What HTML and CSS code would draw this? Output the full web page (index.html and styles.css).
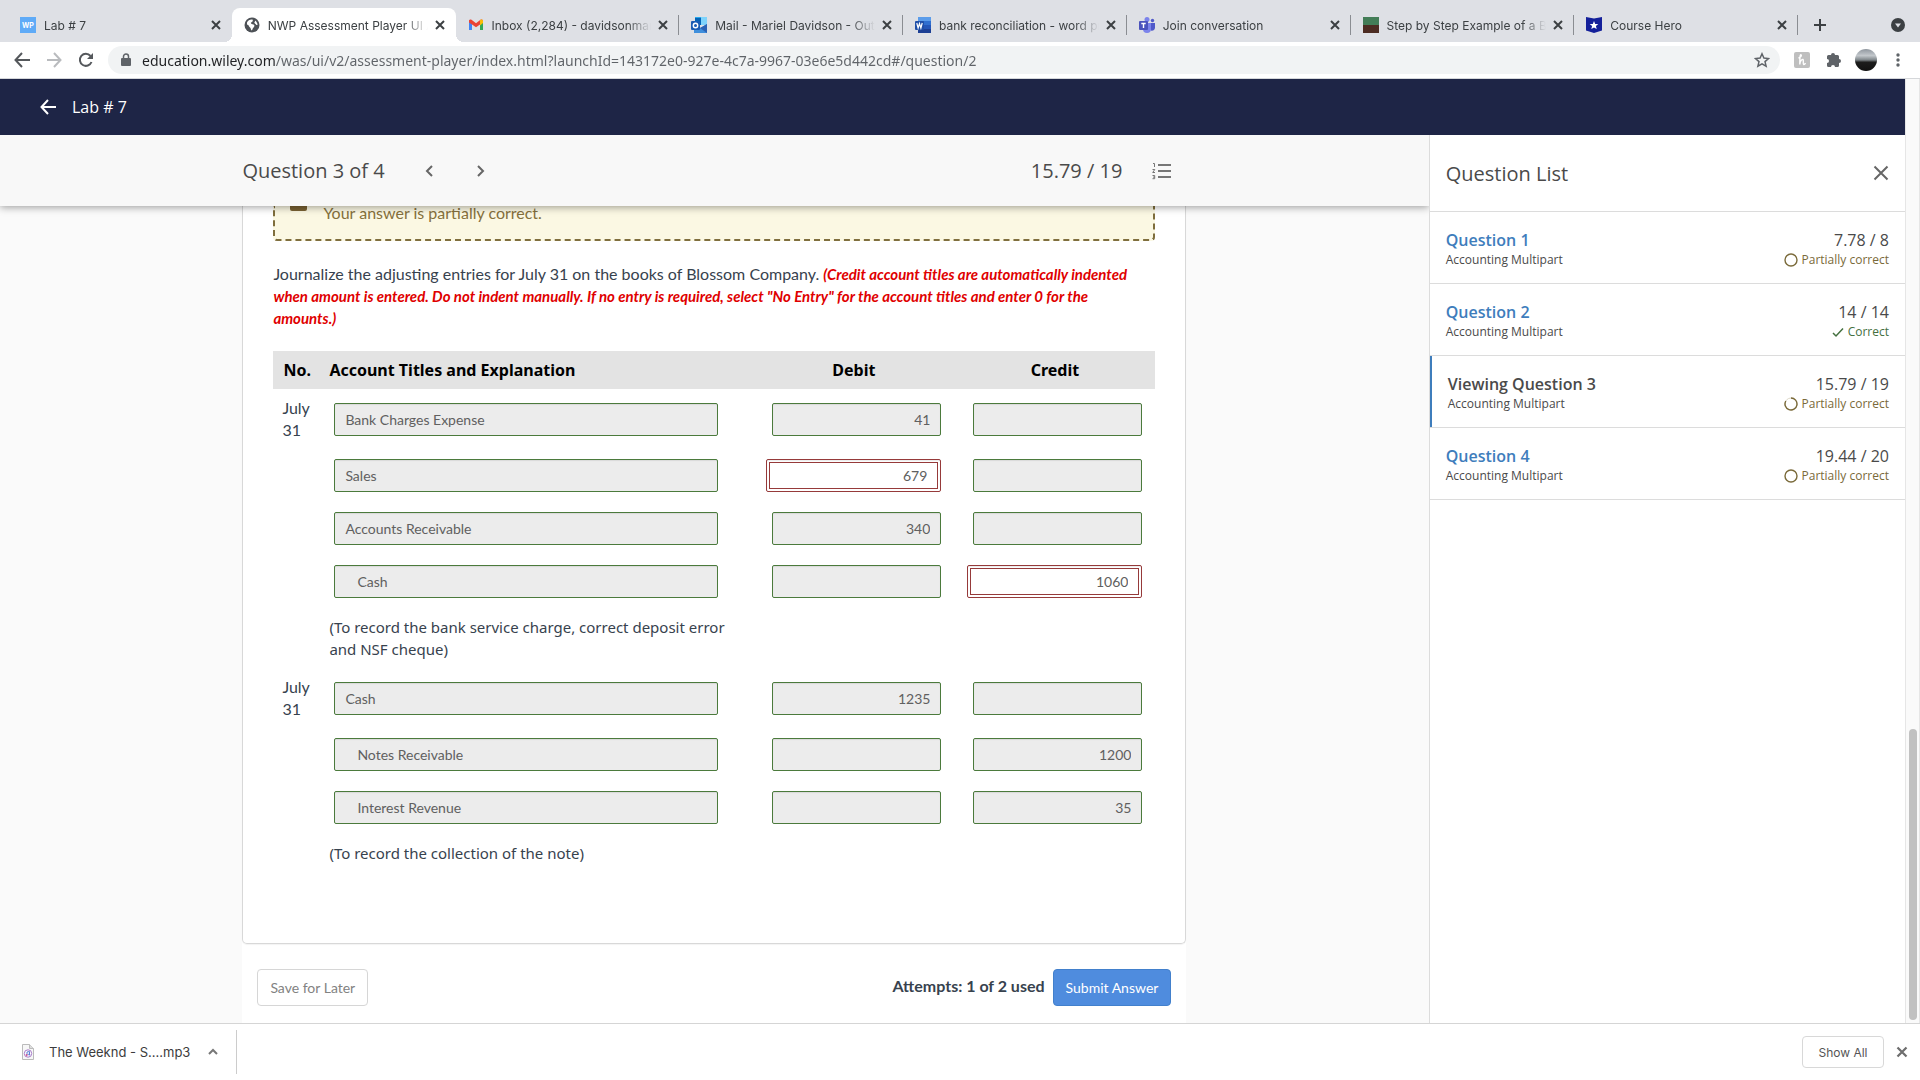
FILE: index.html
```
<!DOCTYPE html>
<html lang="en">

<head>
    <meta charset="UTF-8">
    <meta name="viewport" content="width=device-width, initial-scale=1.0">
    <title>NWP Assessment Player UI Application</title>
    <link rel="stylesheet" href="styles.css">
</head>

<body>
    <!-- shared icons -->
    <svg class="sprite" aria-hidden="true">
        <symbol id="i-close" viewBox="0 0 16 16"><path d="M4 4l8 8M12 4l-8 8" fill="none" stroke="currentColor" stroke-width="2"/></symbol>
        <symbol id="i-ring" viewBox="0 0 14 14"><circle cx="7" cy="7" r="6" fill="none" stroke="currentColor" stroke-width="1.4"/></symbol>
        <symbol id="i-arrow" viewBox="0 0 16 16"><path d="M16 8H2M8 1L1.500 8L8 15" fill="none" stroke="currentColor" stroke-width="2"/></symbol>
    </svg>

    <div class="tab-bar">
        <div class="tabs">
            <div class="tab">
                <svg class="favicon" viewBox="0 0 16 16"><rect width="16" height="16" fill="#5fabf7"/><text x="8" y="11" text-anchor="middle" class="wp">WP</text></svg>
                <span class="tab-title">Lab # 7</span>
                <button class="tab-close" aria-label="Close tab"><svg viewBox="0 0 16 16"><use href="#i-close"/></svg></button>
            </div>
            <div class="tab active">
                <svg class="favicon" viewBox="0 0 16 16"><circle cx="8" cy="8" r="7.500" fill="#4d5156"/><path d="M3 5.500C4 3 6.500 2 8.500 2.500C9.500 4 8 5 7 5.500C6.500 7 8 7 9.500 7.500C11 8 10.500 10 9 11C8.500 12 8.500 13 7.500 13.500C6.500 12 7 11 5.500 10C4.500 9 5 8 3 7.500ZM11 3.500C12.500 4.500 13.500 6 13.500 8C12.500 8.500 11.500 7 10.500 6C10 5 11.500 4.500 11 3.500Z" fill="#fff"/></svg>
                <span class="tab-title">NWP Assessment Player UI Application</span>
                <button class="tab-close" aria-label="Close tab"><svg viewBox="0 0 16 16"><use href="#i-close"/></svg></button>
            </div>
            <div class="tab divided">
                <svg class="favicon" viewBox="0 0 16 16"><path d="M1 3.500V13h3V7z" fill="#4285f4"/><path d="M15 3.500V13h-3V7z" fill="#34a853"/><path d="M1 3.200C1.500 2.200 2.800 2.200 3.500 2.800L8 6.300L12.500 2.800C13.500 2 14.600 2.500 15 3.300L12 7.500L8 10.200L4 7.500L1 5.500z" fill="#ea4335"/><path d="M12 3.200l.5-.4c1-.8 2.500-.2 2.500 1.200V6l-3 2.500z" fill="#fbbc04"/></svg>
                <span class="tab-title">Inbox (2,284) - davidsonmariel@gmail.com</span>
                <button class="tab-close" aria-label="Close tab"><svg viewBox="0 0 16 16"><use href="#i-close"/></svg></button>
            </div>
            <div class="tab divided">
                <svg class="favicon" viewBox="0 0 16 16"><path d="M4 0h12v8H4z" fill="#28a8ea"/><path d="M10 0h6v8h-6z" fill="#7fd3fb"/><path d="M4 1h6v7H4z" fill="#0364b8"/><path d="M3 16V7l6.500 4L16 7v9z" fill="#3f8fdc"/><path d="M16 7v9L9 11z" fill="#2b62b5"/><rect y="4" width="9" height="9" rx="1" fill="#1a5db4"/><circle cx="4.500" cy="8.500" r="2.200" fill="none" stroke="#fff" stroke-width="1.400"/></svg>
                <span class="tab-title">Mail - Mariel Davidson - Outlook</span>
                <button class="tab-close" aria-label="Close tab"><svg viewBox="0 0 16 16"><use href="#i-close"/></svg></button>
            </div>
            <div class="tab divided">
                <svg class="favicon" viewBox="0 0 16 16"><path d="M3 0h13v4H3z" fill="#5b9cea"/><path d="M3 4h13v4H3z" fill="#2f6fd0"/><path d="M3 8h13v4H3z" fill="#2456b8"/><path d="M3 12h13v4H3z" fill="#1c3f94"/><rect y="4" width="9" height="9" rx="1" fill="#1f4fa8"/><path d="M1.800 6l1.300 5L4.500 6.500L5.900 11L7.200 6" fill="none" stroke="#fff" stroke-width="1.200"/></svg>
                <span class="tab-title">bank reconciliation - word problem</span>
                <button class="tab-close" aria-label="Close tab"><svg viewBox="0 0 16 16"><use href="#i-close"/></svg></button>
            </div>
            <div class="tab divided">
                <svg class="favicon" viewBox="0 0 16 16"><circle cx="8" cy="2.500" r="2.500" fill="#7b83eb"/><circle cx="13.500" cy="3.500" r="1.700" fill="#5059c9"/><path d="M11 6h5v5a3 3 0 0 1-4 2.500z" fill="#5059c9"/><path d="M4 6h8v6a4 4 0 0 1-8 0z" fill="#7b83eb"/><rect y="4" width="9" height="9" rx="1" fill="#4b53bc"/><path d="M2.300 6.500h4.400M4.500 6.500V11" stroke="#fff" stroke-width="1.400"/></svg>
                <span class="tab-title">Join conversation</span>
                <button class="tab-close" aria-label="Close tab"><svg viewBox="0 0 16 16"><use href="#i-close"/></svg></button>
            </div>
            <div class="tab divided">
                <svg class="favicon" viewBox="0 0 16 16"><rect width="16" height="8" fill="#437d57"/><rect y="8" width="16" height="8" fill="#4c2c22"/></svg>
                <span class="tab-title">Step by Step Example of a Bank Reconciliation</span>
                <button class="tab-close" aria-label="Close tab"><svg viewBox="0 0 16 16"><use href="#i-close"/></svg></button>
            </div>
            <div class="tab divided">
                <svg class="favicon" viewBox="0 0 16 16"><path d="M0 0l8 1.500L16 0v13.500L8 16L0 13.500z" fill="#14209a"/><path d="M8 4l1.200 2.900 3.100.2-2.400 2 .8 3L8 10.400l-2.700 1.700.8-3-2.400-2 3.100-.2z" fill="#fff"/></svg>
                <span class="tab-title">Course Hero</span>
                <button class="tab-close" aria-label="Close tab"><svg viewBox="0 0 16 16"><use href="#i-close"/></svg></button>
            </div>
        </div>
        <div class="tab-tools">
            <button aria-label="New tab"><svg width="16" height="16" viewBox="0 0 16 16"><path d="M8 2v12M2 8h12" stroke="#3c4043" stroke-width="2"/></svg></button>
            <button aria-label="Search tabs"><svg width="16" height="16" viewBox="0 0 16 16"><circle cx="8" cy="8" r="7" fill="#3c4043"/><path d="M5 6.500h6L8 10.500z" fill="#dee0e5"/></svg></button>
        </div>
    </div>

    <div class="toolbar">
        <div class="nav-buttons">
            <button aria-label="Back"><svg width="16" height="16"><use href="#i-arrow"/></svg></button>
            <button class="disabled" aria-label="Forward"><svg width="16" height="16" viewBox="0 0 16 16"><path d="M1 8h13M8 1l6.500 7L8 15" fill="none" stroke="currentColor" stroke-width="2"/></svg></button>
            <button aria-label="Reload"><svg width="16" height="16" viewBox="0 0 16 16"><path d="M13.500 10A6 6 0 1 1 12.500 4" fill="none" stroke="currentColor" stroke-width="2"/><path d="M15 1v6H9z" fill="currentColor"/></svg></button>
        </div>
        <div class="url-bar">
            <svg width="12" height="14" viewBox="0 0 12 14"><path d="M2 5h8a1 1 0 0 1 1 1v6a1 1 0 0 1-1 1H2a1 1 0 0 1-1-1V6a1 1 0 0 1 1-1z" fill="#5f6368"/><path d="M3.500 5V3.500a2.500 2.500 0 0 1 5 0V5" fill="none" stroke="#5f6368" stroke-width="1.500"/></svg>
            <input class="url" type="text" aria-label="Address" value="education.wiley.com/was/ui/v2/assessment-player/index.html?launchId=143172e0-927e-4c7a-9967-03e6e5d442cd#/question/2">
            <button aria-label="Bookmark"><svg width="16" height="16" viewBox="0 0 16 16"><path d="M8 1.800l1.900 4.300 4.600.4-3.500 3.100 1.100 4.600L8 11.800l-4.100 2.400L5 9.600 1.500 6.500l4.600-.4z" fill="none" stroke="#5f6368" stroke-width="1.500"/></svg></button>
        </div>
        <div class="extensions">
            <button aria-label="Honey"><svg width="16" height="16" viewBox="0 0 16 16"><rect width="16" height="16" rx="2" fill="#bfbfbf"/><path d="M4.500 6C6.500 5.500 8 3.500 7 2.800C6 2.500 5.800 6 5.800 12.500C6 9.500 7.500 7 9 7.500C10 8 8.500 12 9.700 12.500C10.500 12.700 11 12 11.500 11" fill="none" stroke="#fff" stroke-width="1.400"/></svg></button>
            <button aria-label="Extensions"><svg width="16" height="16" viewBox="0 0 16 16"><path d="M1 4.500A1.500 1.500 0 0 1 2.500 3H5a2 2 0 0 1 4 0h2.500A1.500 1.500 0 0 1 13 4.500V7a2 2 0 0 1 0 4v2.500a1.500 1.500 0 0 1-1.500 1.500H9a2 2 0 0 0-4 0H2.500A1.500 1.500 0 0 1 1 13.500V11a2 2 0 0 0 0-4z" fill="#5f6368"/></svg></button>
            <button aria-label="Profile"><span class="avatar"></span></button>
            <button aria-label="Menu"><svg width="16" height="16" viewBox="0 0 16 16"><circle cx="8" cy="3" r="1.700" fill="#5f6368"/><circle cx="8" cy="8" r="1.700" fill="#5f6368"/><circle cx="8" cy="13" r="1.700" fill="#5f6368"/></svg></button>
        </div>
    </div>

    <div class="viewport">
        <div class="page">
            <header class="app-header">
                <a href="#" aria-label="Back"><svg width="16" height="16"><use href="#i-arrow"/></svg></a>
                <h1>Lab # 7</h1>
            </header>
            <div class="columns">
                <main>
                    <div class="question-bar">
                        <div class="question-bar-inner">
                            <span>Question 3 of 4</span>
                            <div class="pager">
                                <button aria-label="Previous question"><svg width="8" height="14" viewBox="0 0 8 14"><path d="M7 2L2 7l5 5" fill="none" stroke="#666" stroke-width="2"/></svg></button>
                                <button aria-label="Next question"><svg width="8" height="14" viewBox="0 0 8 14"><path d="M1 2l5 5-5 5" fill="none" stroke="#666" stroke-width="2"/></svg></button>
                            </div>
                            <span class="score">15.79 / 19</span>
                            <button class="list-toggle" aria-label="Question list"><svg width="20" height="18" viewBox="0 0 20 18"><path d="M6 3h13M6 9h13M6 15h13" stroke="#777" stroke-width="2"/><path d="M1 1.500h1.500V5M.5 7.500h2.300L.7 10.500h2.300M.5 13.500h2.200v3.200H.5M1 15.100h1.700" fill="none" stroke="#777"/></svg></button>
                        </div>
                    </div>

                    <div class="sheet">
                        <section class="card">
                            <div class="alert">
                                <span class="alert-icon"></span>
                                <span>Your answer is partially correct.</span>
                            </div>
                            <p class="instructions">Journalize the adjusting entries for July 31 on the books of Blossom Company. <strong>(Credit account titles are automatically indented when amount is entered. Do not indent manually. If no entry is required, select "No Entry" for the account titles and enter 0 for the amounts.)</strong></p>
                            <table class="journal">
                                <thead>
                                    <tr>
                                        <th class="col-no">No.</th>
                                        <th>Account Titles and Explanation</th>
                                        <th class="col-amount">Debit</th>
                                        <th class="col-amount">Credit</th>
                                    </tr>
                                </thead>
                                <tbody>
                                    <tr class="first">
                                        <td>July 31</td>
                                        <td><input class="field account" aria-label="Account title" value="Bank Charges Expense" readonly></td>
                                        <td><input class="field amount" aria-label="Debit" value="41" readonly></td>
                                        <td><input class="field amount" aria-label="Credit" readonly></td>
                                    </tr>
                                    <tr>
                                        <td></td>
                                        <td><input class="field account" aria-label="Account title" value="Sales" readonly></td>
                                        <td><input class="field amount wrong" aria-label="Debit" value="679"></td>
                                        <td><input class="field amount" aria-label="Credit" readonly></td>
                                    </tr>
                                    <tr>
                                        <td></td>
                                        <td><input class="field account" aria-label="Account title" value="Accounts Receivable" readonly></td>
                                        <td><input class="field amount" aria-label="Debit" value="340" readonly></td>
                                        <td><input class="field amount" aria-label="Credit" readonly></td>
                                    </tr>
                                    <tr>
                                        <td></td>
                                        <td><input class="field account indent" aria-label="Account title" value="Cash" readonly></td>
                                        <td><input class="field amount" aria-label="Debit" readonly></td>
                                        <td><input class="field amount wrong" aria-label="Credit" value="1060"></td>
                                    </tr>
                                    <tr class="note">
                                        <td></td>
                                        <td>(To record the bank service charge, correct deposit error and NSF cheque)</td>
                                        <td></td>
                                        <td></td>
                                    </tr>
                                    <tr class="first">
                                        <td>July 31</td>
                                        <td><input class="field account" aria-label="Account title" value="Cash" readonly></td>
                                        <td><input class="field amount" aria-label="Debit" value="1235" readonly></td>
                                        <td><input class="field amount" aria-label="Credit" readonly></td>
                                    </tr>
                                    <tr>
                                        <td></td>
                                        <td><input class="field account indent" aria-label="Account title" value="Notes Receivable" readonly></td>
                                        <td><input class="field amount" aria-label="Debit" readonly></td>
                                        <td><input class="field amount" aria-label="Credit" value="1200" readonly></td>
                                    </tr>
                                    <tr>
                                        <td></td>
                                        <td><input class="field account indent" aria-label="Account title" value="Interest Revenue" readonly></td>
                                        <td><input class="field amount" aria-label="Debit" readonly></td>
                                        <td><input class="field amount" aria-label="Credit" value="35" readonly></td>
                                    </tr>
                                    <tr class="note">
                                        <td></td>
                                        <td>(To record the collection of the note)</td>
                                        <td></td>
                                        <td></td>
                                    </tr>
                                </tbody>
                            </table>
                        </section>
                        <div class="actions">
                            <button class="btn">Save for Later</button>
                            <span class="attempts">Attempts: 1 of 2 used</span>
                            <button class="btn btn-primary">Submit Answer</button>
                        </div>
                    </div>
                </main>

                <aside class="question-list">
                    <div class="list-header">
                        <h2>Question List</h2>
                        <button aria-label="Close question list"><svg width="16" height="16" viewBox="0 0 16 16"><path d="M1.500 1.500l13 13M14.500 1.500l-13 13" stroke="#666" stroke-width="2"/></svg></button>
                    </div>
                    <ul>
                        <li>
                            <div><a href="#">Question 1</a><small>Accounting Multipart</small></div>
                            <div class="result"><span>7.78 / 8</span><small class="partial"><svg width="14" height="14"><use href="#i-ring"/></svg>Partially correct</small></div>
                        </li>
                        <li>
                            <div><a href="#">Question 2</a><small>Accounting Multipart</small></div>
                            <div class="result"><span>14 / 14</span><small class="correct"><svg width="12" height="12" viewBox="0 0 12 12"><path d="M1 7l3 3 7-7.500" fill="none" stroke="currentColor" stroke-width="1.500"/></svg>Correct</small></div>
                        </li>
                        <li class="current">
                            <div><b>Viewing Question 3</b><small>Accounting Multipart</small></div>
                            <div class="result"><span>15.79 / 19</span><small class="partial"><svg width="14" height="14" viewBox="0 0 14 14"><circle cx="7" cy="7" r="6" fill="none" stroke="#ddd8c8"/><path d="M7 1a6 6 0 1 1-5.200 3" fill="none" stroke="currentColor" stroke-width="1.400"/></svg>Partially correct</small></div>
                        </li>
                        <li>
                            <div><a href="#">Question 4</a><small>Accounting Multipart</small></div>
                            <div class="result"><span>19.44 / 20</span><small class="partial"><svg width="14" height="14"><use href="#i-ring"/></svg>Partially correct</small></div>
                        </li>
                    </ul>
                </aside>
            </div>
        </div>
        <div class="scrollbar"><div class="thumb"></div></div>
    </div>

    <div class="downloads">
        <div class="download-item">
            <svg width="12" height="16" viewBox="0 0 12 16"><path d="M.5.500h7l4 4v11H.5z" fill="#f7f7f7" stroke="#bbb"/><path d="M7.500.500v4h4" fill="#ddd" stroke="#bbb"/><circle cx="6" cy="9.500" r="3.700" fill="#fff" stroke="#a779c9"/><path d="M5 11V8l2.500-.5v3" fill="none" stroke="#5a7fd6"/><circle cx="4.700" cy="11" r="1" fill="#d0578f"/><circle cx="7.200" cy="10.500" r="1" fill="#5a7fd6"/></svg>
            <span>The Weeknd - S....mp3</span>
            <button aria-label="Download options"><svg width="10" height="8" viewBox="0 0 10 8"><path d="M1 6l4-4 4 4" fill="none" stroke="#777" stroke-width="2"/></svg></button>
        </div>
        <button class="show-all">Show All</button>
        <button class="close-downloads" aria-label="Close downloads"><svg width="18" height="18"><use href="#i-close"/></svg></button>
    </div>
</body>

</html>
```
FILE: styles.css
```
* {
    box-sizing: border-box;
}

body {
    margin: 0;
    height: 100vh;
    display: flex;
    flex-direction: column;
    overflow: hidden;
    background: #fff;
    color: #4a4a4a;
    font-family: "Open Sans", "Noto Sans", sans-serif;
}

button {
    display: flex;
    align-items: center;
    justify-content: center;
    padding: 0;
    border: 0;
    background: none;
    color: inherit;
    font: inherit;
}

svg {
    display: block;
    flex: none;
}

.sprite {
    position: absolute;
    width: 0;
    height: 0;
}

/* browser tabs */

.tab-bar {
    display: flex;
    flex: none;
    padding: 8px 14px 0 8px;
    background: #dee0e5;
    font: 12px Inter, sans-serif;
    color: #3c4043;
}

.tabs {
    display: flex;
    flex: 1;
    min-width: 0;
}

.tab {
    display: flex;
    flex: 1;
    align-items: center;
    min-width: 0;
    height: 34px;
    padding-left: 12px;
    position: relative;
}

.tab.active {
    background: #fff;
    border-radius: 8px 8px 0 0;
}

.tab.active::before,
.tab.active::after {
    content: "";
    position: absolute;
    bottom: 0;
    width: 8px;
    height: 8px;
}

.tab.active::before {
    left: -8px;
    background: radial-gradient(circle at 0 0, transparent 8px, #fff 8px);
}

.tab.active::after {
    right: -8px;
    background: radial-gradient(circle at 100% 0, transparent 8px, #fff 8px);
}

.tab.divided::after {
    content: "";
    width: 1px;
    height: 20px;
    background: #8a8d92;
}

.favicon {
    width: 16px;
    height: 16px;
}

.wp {
    font: bold 7px Inter, sans-serif;
    fill: #fff;
}

.tab-title {
    flex: 1;
    min-width: 0;
    margin: 0 4px 0 8px;
    overflow: hidden;
    white-space: nowrap;
    -webkit-mask-image: linear-gradient(to left, transparent, #000 24px);
    mask-image: linear-gradient(to left, transparent, #000 24px);
}

.tab-close {
    width: 16px;
    margin-right: 8px;
}

.tab.divided .tab-close {
    margin-right: 7px;
}

.tab-close svg {
    width: 16px;
    height: 16px;
}

.tab-tools {
    display: flex;
    justify-content: space-between;
    width: 108px;
    padding-left: 14px;
}

/* address bar */

.toolbar {
    display: flex;
    flex: none;
    align-items: center;
    height: 37px;
    border-bottom: 1px solid #d5d7da;
    color: #55585c;
}

.nav-buttons {
    display: flex;
    gap: 16px;
    padding: 0 14px;
}

.disabled {
    color: #b9bbbe;
}

.url-bar {
    display: flex;
    flex: 1;
    align-items: center;
    height: 28px;
    padding: 0 10px 0 12px;
    border-radius: 14px;
    background: #f1f3f4;
}

/* the domain is darker than the rest of the address */
.url {
    flex: 1;
    height: 28px;
    margin-left: 10px;
    padding: 0;
    border: 0;
    font: 14px "Noto Sans", sans-serif;
    color: transparent;
    background: linear-gradient(to right, #202124 133px, #5f6368 133px);
    -webkit-background-clip: text;
    background-clip: text;
}

.extensions {
    display: flex;
    gap: 8px;
    padding: 0 10px;
}

.extensions button {
    width: 24px;
}

.avatar {
    width: 22px;
    height: 22px;
    border-radius: 50%;
    background: linear-gradient(#8f969e, #c3c8cc 30%, #7d8488 50%, #1d1d1d 60%, #111);
}

/* page */

.viewport {
    display: flex;
    flex: 1;
    min-height: 0;
}

.page {
    display: flex;
    flex: 1;
    flex-direction: column;
    min-width: 0;
}

.app-header {
    display: flex;
    flex: none;
    align-items: center;
    gap: 16px;
    height: 56px;
    padding: 0 40px;
    background: #1e2546;
    color: #fff;
}

.app-header a {
    color: inherit;
}

.app-header h1 {
    margin: 0;
    font-size: 16px;
    font-weight: 500;
}

.columns {
    display: flex;
    flex: 1;
    min-height: 0;
}

main {
    display: flex;
    flex: 1;
    flex-direction: column;
    min-width: 0;
    overflow: hidden;
    background: #fafafa;
}

.question-bar {
    flex: none;
    background: #f8f8f8;
    box-shadow: 0 1px 8px rgba(0, 0, 0, .4);
    z-index: 1;
}

.question-bar-inner {
    display: flex;
    align-items: center;
    max-width: 944px;
    height: 71px;
    margin: 0 auto;
    padding-right: 14px;
    font-size: 20px;
}

.pager {
    display: flex;
    margin-left: 18px;
}

.pager button {
    width: 52px;
    height: 40px;
}

.score {
    margin-left: auto;
}

.list-toggle {
    margin-left: 30px;
}

.sheet {
    flex: 1;
    width: 944px;
    max-width: 100%;
    margin: 0 auto;
    background: #fff;
    font: 16px/22px Lato, sans-serif;
    color: #37424e;
}

.card {
    padding: 0 30px 71px;
    border: 1px solid #d8d8d8;
    border-top: 0;
    border-radius: 0 0 5px 5px;
    box-shadow: 0 1px 1px rgba(0, 0, 0, .05);
}

.alert {
    display: flex;
    gap: 16px;
    padding: 0 15px 19px;
    border: 2px dashed #7f6e3d;
    border-top: 0;
    border-radius: 0 0 4px 4px;
    background: #fbf8e3;
    color: #85703c;
    line-height: 14px;
}

.alert-icon {
    width: 17px;
    height: 5px;
    border-radius: 0 0 2px 2px;
    background: #7a6233;
}

.instructions {
    margin: 22px 0;
    padding-right: 12px;
}

.instructions strong {
    color: #df0000;
    font-size: 15px;
    font-style: italic;
}

.journal {
    width: 100%;
    border-collapse: collapse;
    table-layout: fixed;
}

.journal th {
    height: 38px;
    padding: 0 9px;
    background: #e3e3e3;
    color: #000;
    font: bold 16px "Noto Sans", sans-serif;
    text-align: left;
}

.journal .col-no {
    width: 47px;
    padding-left: 10px;
    padding-right: 0;
}

.journal .col-amount {
    width: 201px;
    text-align: center;
}

.journal td {
    padding: 10px 13px 10px 9px;
    vertical-align: top;
}

.journal .first td {
    padding-top: 14px;
    padding-bottom: 13px;
}

.journal .first td:first-child {
    padding: 8px 4px 8px 9px;
}

.journal .note td {
    padding: 8px 9px;
    font: 15px/22px "Noto Sans", sans-serif;
}

.field {
    display: block;
    height: 33px;
    padding: 0 10px;
    border: 1px solid #4b7a3c;
    border-radius: 2px;
    background: #ececec;
    box-shadow: inset 0 1px 1px rgba(0, 0, 0, .08);
    color: #606060;
    font: 14px Lato, sans-serif;
}

.account {
    width: 384px;
    margin-left: 5px;
}

.indent {
    padding-left: 22px;
}

.amount {
    width: 169px;
    margin-left: auto;
    text-align: right;
}

.wrong {
    width: 175px;
    padding-right: 13px;
    border-color: #963a3a;
    background: #fff;
    outline: 1px solid #963a3a;
    outline-offset: -4px;
}

.actions {
    display: flex;
    align-items: center;
    padding: 25px 15px 16px;
}

.attempts {
    margin: 0 8px 4px auto;
    font-weight: bold;
}

.btn {
    height: 37px;
    padding: 0 12px;
    border: 1px solid #d6d6d6;
    border-radius: 4px;
    background: #fff;
    color: #828282;
    font-size: 14px;
}

.btn-primary {
    border-color: #4280cc;
    background: #4f8cde;
    color: #fff;
}

/* question list */

.question-list {
    flex: none;
    width: 25%;
    border-left: 1px solid #dcdcdc;
    background: #fff;
}

.list-header {
    display: flex;
    align-items: center;
    justify-content: space-between;
    height: 77px;
    padding: 0 16px;
    border-bottom: 1px solid #dcdcdc;
}

.list-header h2 {
    margin: 0;
    font-size: 20px;
    font-weight: 400;
}

.question-list ul {
    margin: 0;
    padding: 0;
    list-style: none;
}

.question-list li {
    display: flex;
    justify-content: space-between;
    padding: 17px 16px 14px;
    border-bottom: 1px solid #dcdcdc;
    font-size: 16px;
    line-height: 22px;
}

.question-list li.current {
    box-shadow: inset 2px 0 #3e7dbc;
    padding-left: 18px;
}

.question-list a {
    color: #3e7dbc;
    font-weight: 600;
    text-decoration: none;
}

.question-list b {
    font-weight: 600;
}

.question-list small {
    display: flex;
    align-items: center;
    gap: 4px;
    font-size: 12px;
    line-height: 18px;
}

.result {
    text-align: right;
}

.question-list .result small {
    justify-content: flex-end;
}

.partial {
    color: #7a6a3a;
}

.correct {
    color: #44703f;
}

.scrollbar {
    display: flex;
    flex-direction: column;
    justify-content: flex-end;
    width: 15px;
    padding: 3px;
    border: 1px solid #e6e6e6;
    border-width: 0 1px;
    background: #fafafa;
}

.thumb {
    height: 31%;
    width: 8px;
    border-radius: 4px;
    background: #c1c1c1;
}

/* downloads shelf */

.downloads {
    display: flex;
    flex: none;
    align-items: center;
    height: 57px;
    padding-right: 9px;
    border-top: 1px solid #d5d5d5;
    font: 13px Inter, sans-serif;
    color: #3c3c3c;
}

.download-item {
    display: flex;
    align-items: center;
    width: 237px;
    height: 44px;
    padding: 0 18px 0 22px;
    border-right: 1px solid #ccc;
}

.download-item span {
    margin: 0 auto 0 15px;
}

.show-all {
    width: 82px;
    height: 32px;
    margin: 0 9px 0 auto;
    border: 1px solid #d8d8d8;
    border-radius: 4px;
    font-size: 12px;
    color: #555;
}

.close-downloads {
    color: #6e6e6e;
}
```
